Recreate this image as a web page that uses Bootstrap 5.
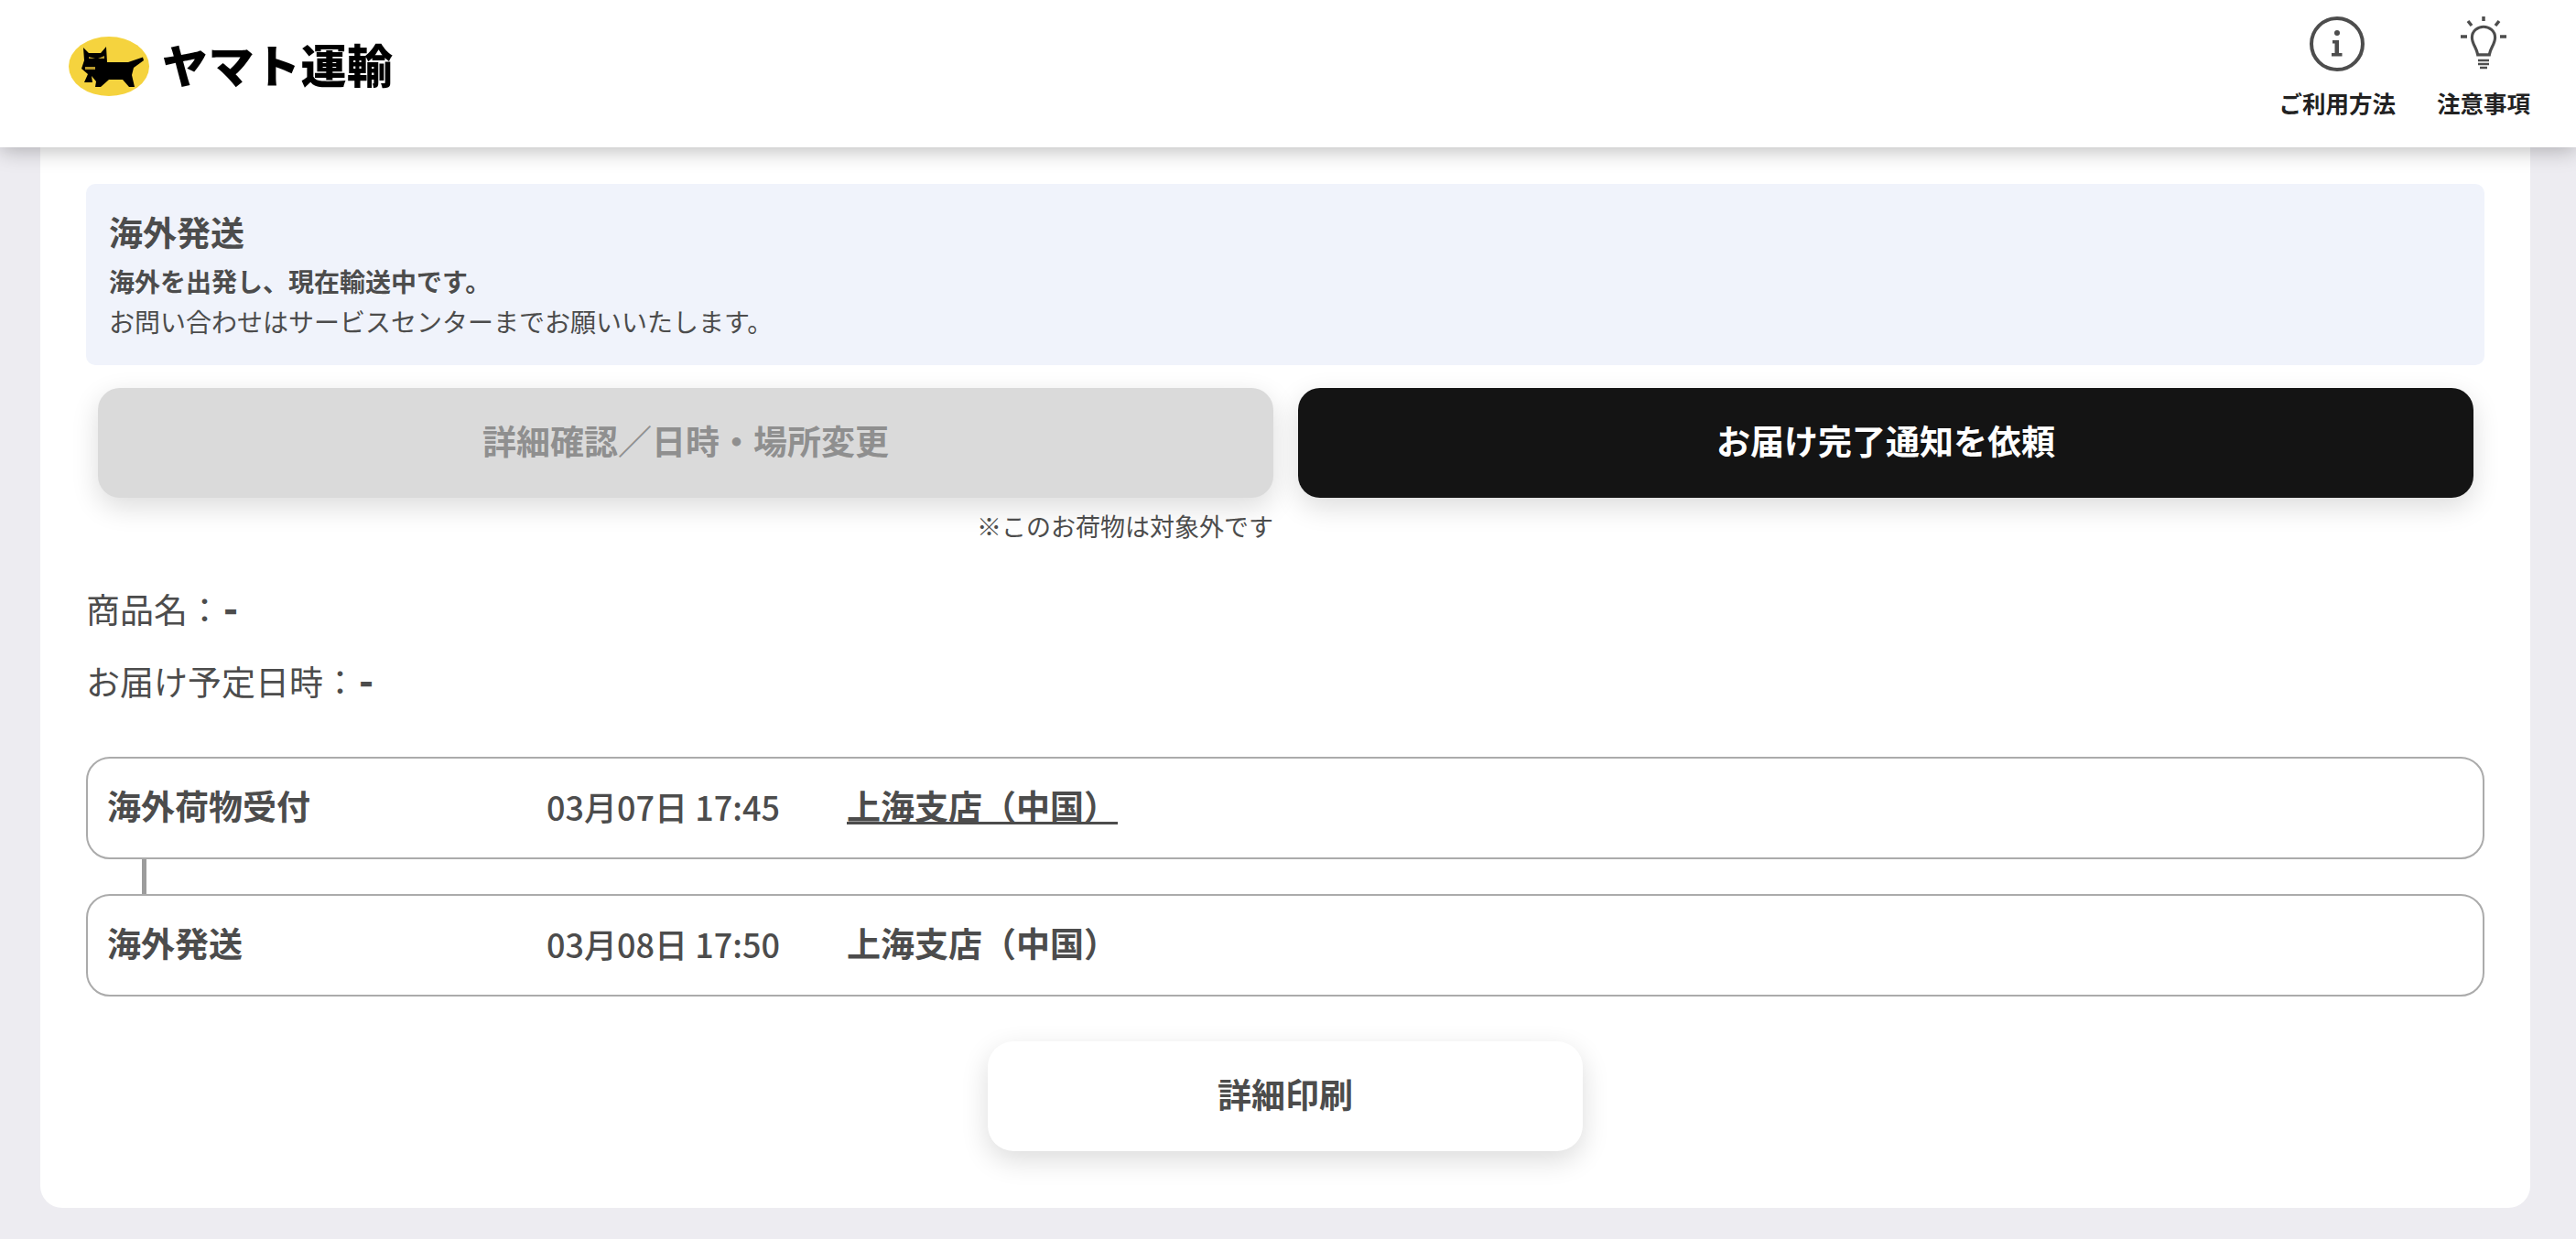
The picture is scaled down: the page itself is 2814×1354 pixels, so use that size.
<!DOCTYPE html>
<html lang="ja">
<head>
<meta charset="utf-8">
<title>ヤマト運輸</title>
<link href="https://cdn.jsdelivr.net/npm/bootstrap@5.3.0/dist/css/bootstrap.min.css" rel="stylesheet">
<style>
html,body{height:100%;overflow:hidden}
body{background:#edecf1;color:#4c4c4c;font-family:"Noto Sans CJK JP","Noto Sans",sans-serif}
.topbar{height:161px;background:#fff;box-shadow:0 3px 22px rgba(0,0,0,.28);position:relative;z-index:2;padding:40px 50px 0 75px}
.logo-word{font-size:50px;font-weight:900;color:#000;line-height:1;letter-spacing:.5px;margin-left:12px;margin-top:-8px;white-space:nowrap}
.help-links{gap:45px;margin-top:-23px}
.help-item{font-size:25.500px;font-weight:700;color:#222;text-decoration:none;line-height:36px;gap:15px}
.help-item svg{display:block}
.sheet{width:2720px;height:1159px;margin-left:44px;background:#fff;border-radius:0 0 24px 24px;padding:40px 50px 0}
.notice{height:198px;background:#f0f3fb;border-radius:10px;padding:26px 25px 0}
.notice-title{font-size:37px;font-weight:700;line-height:52px;margin:0 0 7px}
.notice-lead{font-size:28px;font-weight:700;line-height:43px;margin:0}
.notice-body{font-size:28px;line-height:44px;margin:0}
.action-row{gap:27px;margin:25px 12px 0 13px}
.action{flex:1 1 0;height:120px;border-radius:24px;font-size:37px;font-weight:700;box-shadow:0 10px 30px rgba(0,0,0,.14);border:0;display:flex;align-items:center;justify-content:center;padding:0 0 4px}
.action.btn:disabled{background:#dadada;color:#8f8f8f;opacity:1}
.action-dark{background:#141414;color:#fff}
.action-dark:hover{background:#141414;color:#fff}
.action-note{width:1284px;margin:9px 0 0 13px;text-align:right;font-size:27px;line-height:44px}
.fact{font-size:37px;line-height:52px;margin:0 0 27px}
.fact-first{margin-top:42px}
.fact b{font-weight:900;font-size:42px;line-height:1;padding-left:2px}
.steps{margin-top:57px}
.step{height:112px;border:2px solid #ababab;border-radius:26px;padding-left:21px;padding-bottom:4px;font-size:37px;font-weight:700}
.step-name{width:480px}
.step-date{width:328px;font-size:36px;font-weight:500;white-space:nowrap}
.step-place{color:inherit;text-decoration-thickness:3px}
.step-link{height:38px;width:5px;background:#9c9c9c;margin-left:61px}
.print-wrap{margin-top:49px}
.print-btn{width:650px;height:120px;background:#fff;border:0;border-radius:28px;font-size:37px;font-weight:700;color:#4c4c4c;padding:0 0 4px;box-shadow:0 10px 30px rgba(0,0,0,.14)}
.print-btn:hover{background:#fff;color:#4c4c4c}
</style>
</head>
<body>
<header class="topbar d-flex justify-content-between">
  <div class="d-flex align-items-center align-self-start">
    <svg width="90" height="66" viewBox="75 40 90 66" role="img" aria-label="ロゴ">
      <ellipse cx="119" cy="72.500" rx="44" ry="32.500" fill="#f5d33e"/>
      <path d="M91 52L97 58H110L116 51L117 68H140L156 62.500L157 66L146 74L144 82L147 95H141L134 87H119L110 95H104L105 89L100 83L101 90L92 90L96 81L89 75L92 66Z" fill="#000"/>
      <path d="M97 62L104 64L97 64ZM114 61L107 64L114 64Z" fill="#b8992b"/>
      <path d="M93 73H104V76H93Z" fill="#b8992b"/>
    </svg>
    <span class="logo-word">ヤマト運輸</span>
  </div>
  <nav class="d-flex help-links">
    <a class="help-item d-flex flex-column align-items-center" href="#">
      <svg width="62" height="62" viewBox="0 0 62 62">
        <circle cx="31" cy="31" r="28" fill="none" stroke="#4d4d4d" stroke-width="4"/>
        <circle cx="31" cy="19" r="3" fill="#4d4d4d"/>
        <path d="M26 27H33V41H36.500V44.500H25V41H28.500V30.500H26Z" fill="#4d4d4d"/>
      </svg>
      <span>ご利用方法</span>
    </a>
    <a class="help-item d-flex flex-column align-items-center" href="#">
      <svg width="62" height="62" viewBox="0 0 62 62">
        <g fill="none" stroke="#4d4d4d">
          <path d="M31 1V6M14 6L18 11M48 6L44 11M6 23H13M49 23H56" stroke-width="3.500"/>
          <path d="M24 46C23 38 17 33 17 25C17 17 24 12 31 12C38 12 45 17 45 25C45 33 39 38 38 46Z" stroke-width="3.500" transform="translate(3.100 1.400) scale(.9)"/>
          <path d="M25 49H37M25 53H37M27 57H35" stroke-width="2.500"/>
        </g>
      </svg>
      <span>注意事項</span>
    </a>
  </nav>
</header>
<main class="sheet">
  <section class="notice">
    <h2 class="notice-title">海外発送</h2>
    <p class="notice-lead">海外を出発し、現在輸送中です。</p>
    <p class="notice-body">お問い合わせはサービスセンターまでお願いいたします。</p>
  </section>
  <div class="d-flex action-row">
    <button class="btn action" disabled>詳細確認／日時・場所変更</button>
    <button class="btn action action-dark">お届け完了通知を依頼</button>
  </div>
  <p class="action-note mb-0">※このお荷物は対象外です</p>
  <p class="fact fact-first">商品名：<b>-</b></p>
  <p class="fact">お届け予定日時：<b>-</b></p>
  <div class="steps">
    <div class="step d-flex align-items-center">
      <span class="step-name">海外荷物受付</span>
      <span class="step-date">03月07日 17:45</span>
      <a class="step-place" href="#">上海支店（中国）</a>
    </div>
    <div class="step-link"></div>
    <div class="step d-flex align-items-center">
      <span class="step-name">海外発送</span>
      <span class="step-date">03月08日 17:50</span>
      <span class="step-place">上海支店（中国）</span>
    </div>
  </div>
  <div class="print-wrap d-flex justify-content-center">
    <button class="btn print-btn">詳細印刷</button>
  </div>
</main>
<script src="https://cdn.jsdelivr.net/npm/bootstrap@5.3.0/dist/js/bootstrap.bundle.min.js"></script>
</body>
</html>
